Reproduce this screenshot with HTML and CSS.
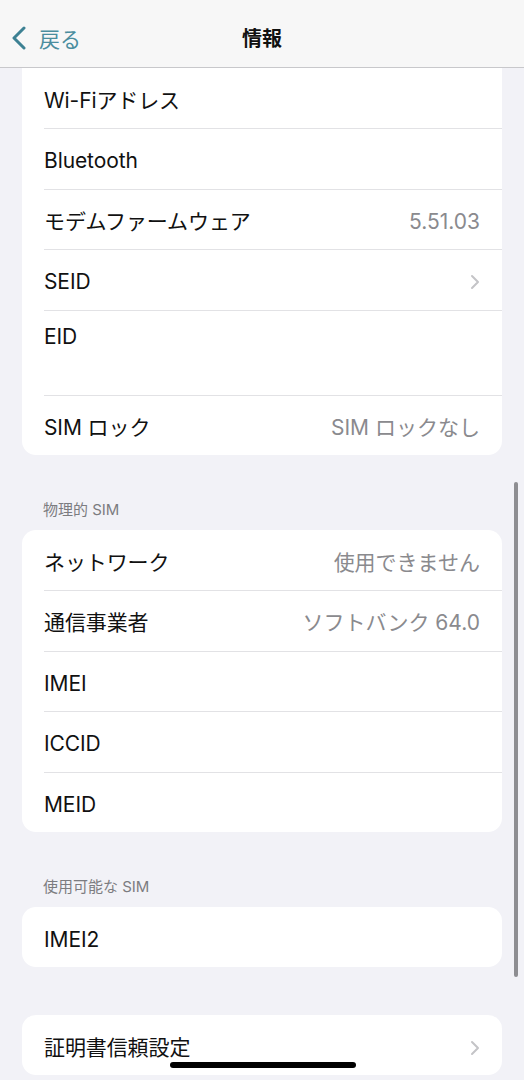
FILE: index.html
```html
<!DOCTYPE html>
<html lang="ja">
<head>
<meta charset="utf-8">
<link rel="stylesheet" href="styles.css">
</head>
<body>
<div class="screen">
  <header class="nav">
    <div class="back">
      <svg class="back-chevron" width="16" height="24" viewBox="0 0 16 24"><path d="M13 2 L3 12 L13 22" fill="none" stroke="#3d8193" stroke-width="3" stroke-linecap="round" stroke-linejoin="round"/></svg>
      <span class="back-label">戻る</span>
    </div>
    <div class="title">情報</div>
  </header>

  <main class="content">
    <section class="card card-first">
      <div class="row"><span class="label">Wi-Fiアドレス</span></div>
      <div class="row"><span class="label">Bluetooth</span></div>
      <div class="row"><span class="label">モデムファームウェア</span><span class="value">5.51.03</span></div>
      <div class="row"><span class="label">SEID</span><svg class="chev" width="10" height="16" viewBox="0 0 10 16"><path d="M2 2 L8 8 L2 14" fill="none" stroke="#c4c4c7" stroke-width="2" stroke-linecap="round" stroke-linejoin="round"/></svg></div>
      <div class="row row-tall"><span class="label">EID</span></div>
      <div class="row"><span class="label">SIM ロック</span><span class="value">SIM ロックなし</span></div>
    </section>

    <div class="section-header">物理的 SIM</div>
    <section class="card">
      <div class="row"><span class="label">ネットワーク</span><span class="value">使用できません</span></div>
      <div class="row"><span class="label">通信事業者</span><span class="value">ソフトバンク 64.0</span></div>
      <div class="row"><span class="label">IMEI</span></div>
      <div class="row"><span class="label">ICCID</span></div>
      <div class="row"><span class="label">MEID</span></div>
    </section>

    <div class="section-header">使用可能な SIM</div>
    <section class="card">
      <div class="row"><span class="label">IMEI2</span></div>
    </section>

    <section class="card card-last">
      <div class="row"><span class="label">証明書信頼設定</span><svg class="chev" width="10" height="16" viewBox="0 0 10 16"><path d="M2 2 L8 8 L2 14" fill="none" stroke="#c4c4c7" stroke-width="2" stroke-linecap="round" stroke-linejoin="round"/></svg></div>
    </section>
  </main>

  <div class="scrollbar"></div>
  <div class="home-indicator"></div>
</div>
</body>
</html>
```

FILE: styles.css
```css
* { box-sizing: border-box; }
html, body {
  margin: 0;
  padding: 0;
  background: #f2f2f7;
}
body {
  font-family: Inter, "Noto Sans CJK JP", sans-serif;
  color: #111;
  width: 524px;
  height: 1080px;
  overflow: hidden;
}
.screen {
  position: relative;
  width: 524px;
  height: 1080px;
}
.nav {
  height: 68px;
  background: #f7f7f7;
  border-bottom: 1px solid #c8c8cb;
  display: grid;
  grid-template-columns: 1fr auto 1fr;
  align-items: center;
  padding-top: 8px;
}
.back {
  display: flex;
  align-items: center;
  gap: 12px;
  padding-left: 11px;
  color: #3d8193;
}
.back-chevron { display: block; }
.back-label {
  font-size: 21px;
  color: #4a8d9e;
}
.title {
  font-size: 20px;
  font-weight: 700;
  color: #111;
}
.content {
  display: flex;
  flex-direction: column;
  padding: 0 22px;
}
.card {
  background: #fff;
  border-radius: 14px;
  overflow: hidden;
}
.card-first {
  border-radius: 0 0 14px 14px;
}
.card-last {
  margin-top: 48px;
}
.row {
  height: 60.5px;
  margin-left: 22px;
  padding-right: 22px;
  display: flex;
  align-items: center;
  justify-content: space-between;
  border-top: 1px solid #e2e2e5;
  padding-top: 5px;
}
.row:first-child {
  border-top: none;
  height: 60px;
}
.row-tall {
  height: 85px;
  align-items: flex-start;
  padding-top: 12px;
}
.label {
  font-size: 21px;
  line-height: 28px;
  letter-spacing: -0.1px;
}
.value {
  font-size: 21px;
  line-height: 28px;
  color: #8a8a8e;
}
.chev { display: block; }
.section-header {
  margin-top: 45px;
  margin-bottom: 10px;
  padding-left: 21px;
  font-size: 15px;
  line-height: 20px;
  color: #7c7c80;
}
.scrollbar {
  position: absolute;
  left: 514px;
  top: 482px;
  width: 4px;
  height: 495px;
  border-radius: 2px;
  background: #8e8e92;
}
.home-indicator {
  position: absolute;
  left: 170px;
  top: 1062px;
  width: 186px;
  height: 6px;
  border-radius: 3px;
  background: #000;
}
```
